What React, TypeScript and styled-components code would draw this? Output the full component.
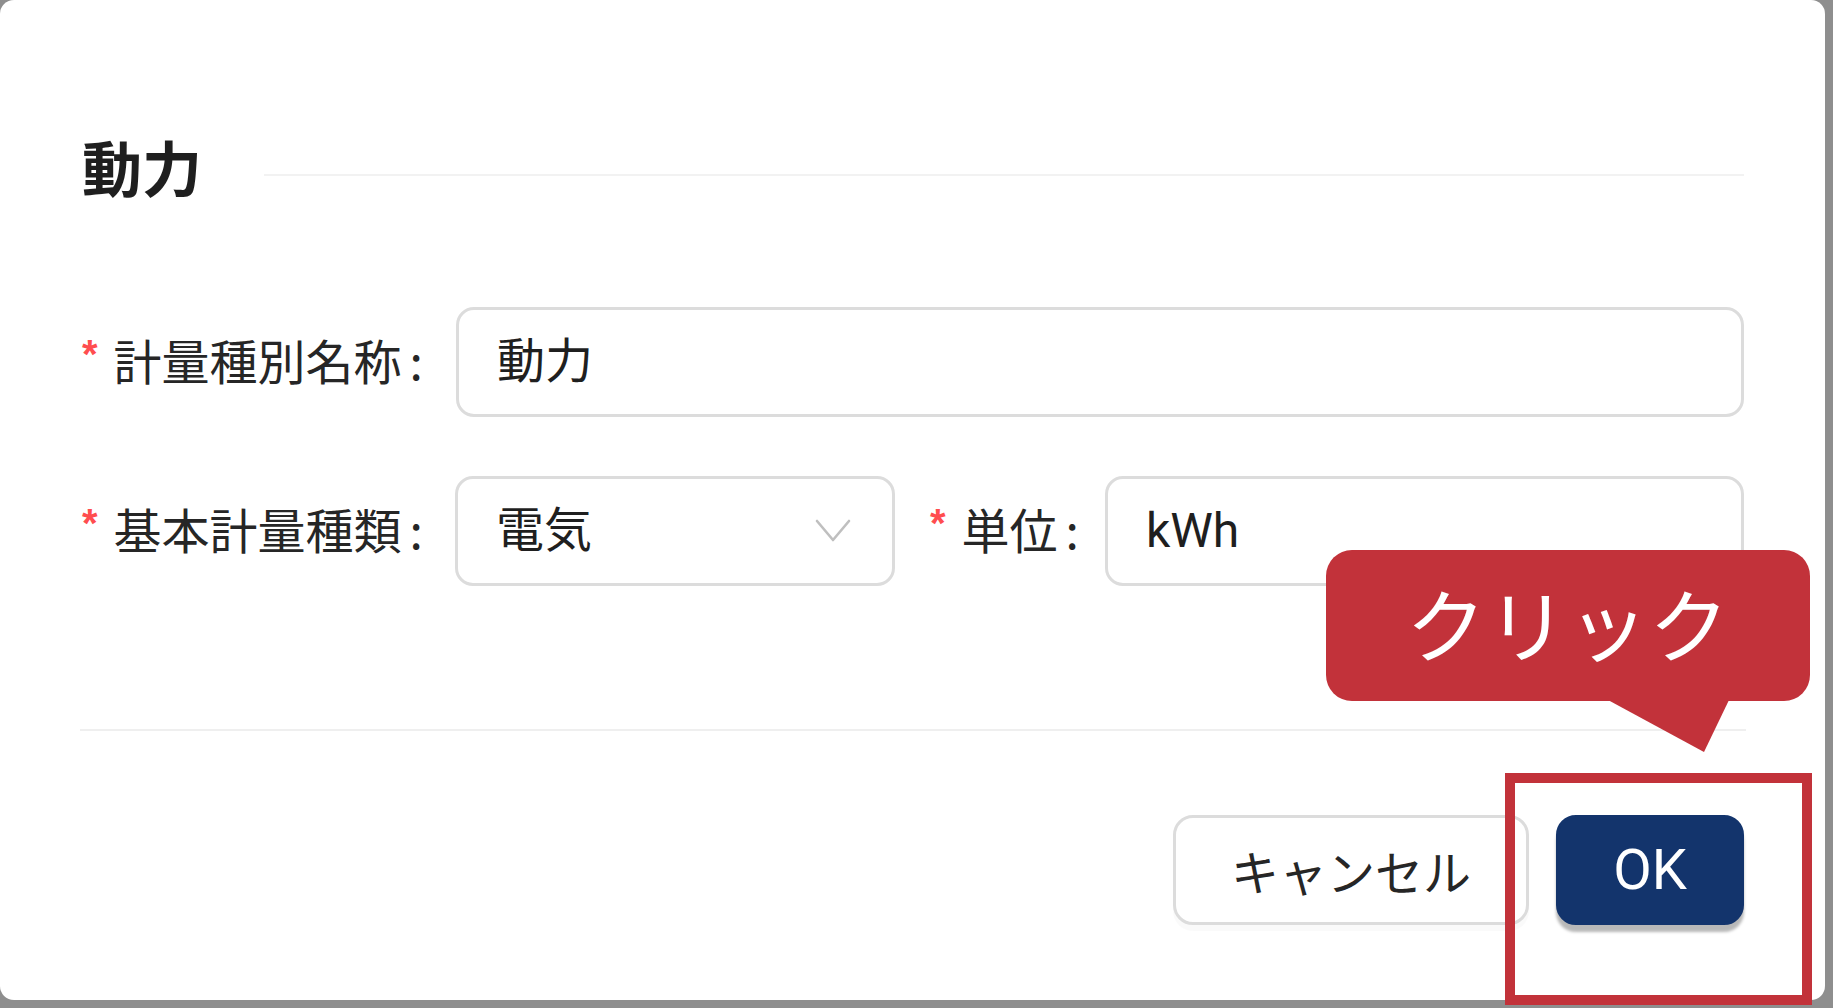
import styled, { createGlobalStyle } from 'styled-components'

const GlobalStyle = createGlobalStyle`
	html, body {
		margin: 0;
		padding: 0;
		background: #8e8e8e;
	}
	body {
		width: 1833px;
		height: 1008px;
		overflow: hidden;
		font-family: Roboto, "Noto Sans CJK JP", sans-serif;
	}
`

const Dialog = styled.div`
	position: relative;
	width: 1825px;
	height: 1000px;
	box-sizing: border-box;
	padding: 128px 81px 0 82px;
	background: #fff;
	border-radius: 14px;
	color: #1f1f1f;
`

const SectionHead = styled.div`
	display: flex;
	align-items: center;
	height: 80px;
`

const SectionTitle = styled.h2`
	margin: 0 0 4px;
	font-family: "Noto Sans CJK JP", sans-serif;
	font-size: 60px;
	font-weight: 700;
	line-height: 80px;
	color: #1f1f1f;
`

const SectionRule = styled.div`
	flex: 1;
	height: 2px;
	margin: 14px 0 0 62px;
	background: #f2f2f2;
`

const Row = styled.div<{ $top: number }>`
	display: flex;
	align-items: center;
	margin-top: ${(p) => p.$top}px;
	height: 110px;
`

const Label = styled.div<{ $width?: number }>`
	flex: none;
	width: ${(p) => (p.$width ? `${p.$width}px` : 'auto')};
	padding-bottom: 12px;
	font-family: "Noto Sans CJK JP", sans-serif;
	font-size: 48px;
	line-height: 110px;
	white-space: nowrap;
	color: #262626;
`

const Req = styled.span`
	display: inline-block;
	margin-right: 16px;
	font-family: "Liberation Sans", sans-serif;
	font-size: 40px;
	font-weight: 700;
	color: #ff4d4f;
	vertical-align: 12px;
`

const Colon = styled.span`
	margin-left: 8px;
`

const Field = styled.div<{ $width?: number }>`
	position: relative;
	display: flex;
	align-items: center;
	box-sizing: border-box;
	${(p) => (p.$width ? `width: ${p.$width}px; flex: none;` : 'flex: 1;')}
	height: 110px;
	padding: 0 40px 0 38px;
	border: 3px solid #dcdcdc;
	border-radius: 18px;
	font-size: 48px;
	color: #1f1f1f;
`

const FieldText = styled.span<{ $latin?: boolean }>`
	flex: 1;
	padding-bottom: ${(p) => (p.$latin ? 2 : 10)}px;
	font-family: Roboto, "Noto Sans CJK JP", sans-serif;
`

const Chevron = styled.svg`
	flex: none;
	width: 36px;
	height: 26px;
	margin-right: 1px;
`

const UnitLabel = styled(Label)`
	margin: 0 26px 0 35px;
`

const Divider = styled.div`
	height: 2px;
	margin: 143px -2px 0 -2px;
	background: #efefef;
`

const Footer = styled.div`
	display: flex;
	justify-content: flex-end;
	gap: 27px;
	margin-top: 84px;
`

const Button = styled.button<{ $primary?: boolean }>`
	box-sizing: border-box;
	height: 110px;
	padding: 0;
	border-radius: 20px;
	font-family: Roboto, "Noto Sans CJK JP", sans-serif;
	font-size: ${(p) => (p.$primary ? 56 : 48)}px;
	cursor: pointer;
	border: 3px solid ${(p) => (p.$primary ? '#13346c' : '#dcdcdc')};
	background: ${(p) => (p.$primary ? '#13346c' : '#fff')};
	color: ${(p) => (p.$primary ? '#fff' : '#262626')};
	width: ${(p) => (p.$primary ? 188 : 356)}px;
	box-shadow: ${(p) =>
		p.$primary ? '0 7px 3px rgba(0, 0, 0, 0.28)' : '0 6px 0 rgba(0, 0, 0, 0.02)'};
`

const Bubble = styled.div`
	position: absolute;
	left: 1326px;
	top: 550px;
	width: 484px;
	height: 151px;
	box-sizing: border-box;
	padding-bottom: 10px;
	display: flex;
	align-items: center;
	justify-content: center;
	background: #c2323a;
	border-radius: 26px;
	color: #fff;
	font-family: "Noto Sans CJK JP", sans-serif;
	font-size: 80px;
	font-weight: 400;
	letter-spacing: 1px;
`

const Tail = styled.svg`
	position: absolute;
	left: 282px;
	top: 150px;
	width: 121px;
	height: 52px;
`

const Highlight = styled.div`
	position: absolute;
	left: 1505px;
	top: 773px;
	width: 307px;
	height: 232px;
	box-sizing: border-box;
	border: 10px solid #c2323a;
	pointer-events: none;
`

export default function App() {
	return (
		<>
			<GlobalStyle />
			<Dialog>
				<SectionHead>
					<SectionTitle>動力</SectionTitle>
					<SectionRule />
				</SectionHead>

				<Row $top={99}>
					<Label $width={374}>
						<Req>*</Req>計量種別名称<Colon>:</Colon>
					</Label>
					<Field>
						<FieldText>動力</FieldText>
					</Field>
				</Row>

				<Row $top={59}>
					<Label $width={373}>
						<Req>*</Req>基本計量種類<Colon>:</Colon>
					</Label>
					<Field $width={440}>
						<FieldText>電気</FieldText>
						<Chevron viewBox="0 0 36 26" fill="none">
							<path d="M2 3 L18 22 L34 3" stroke="#bfbfbf" strokeWidth="2.6" strokeLinecap="round" strokeLinejoin="round" />
						</Chevron>
					</Field>
					<UnitLabel>
						<Req>*</Req>単位<Colon>:</Colon>
					</UnitLabel>
					<Field>
						<FieldText $latin>kWh</FieldText>
					</Field>
				</Row>

				<Divider />

				<Footer>
					<Button>キャンセル</Button>
					<Button $primary>OK</Button>
				</Footer>

				<Bubble>
					クリック
					<Tail viewBox="0 0 121 52">
						<polygon points="0,0 121,0 96,52" fill="#c2323a" />
					</Tail>
				</Bubble>

				<Highlight />
			</Dialog>
		</>
	)
}
